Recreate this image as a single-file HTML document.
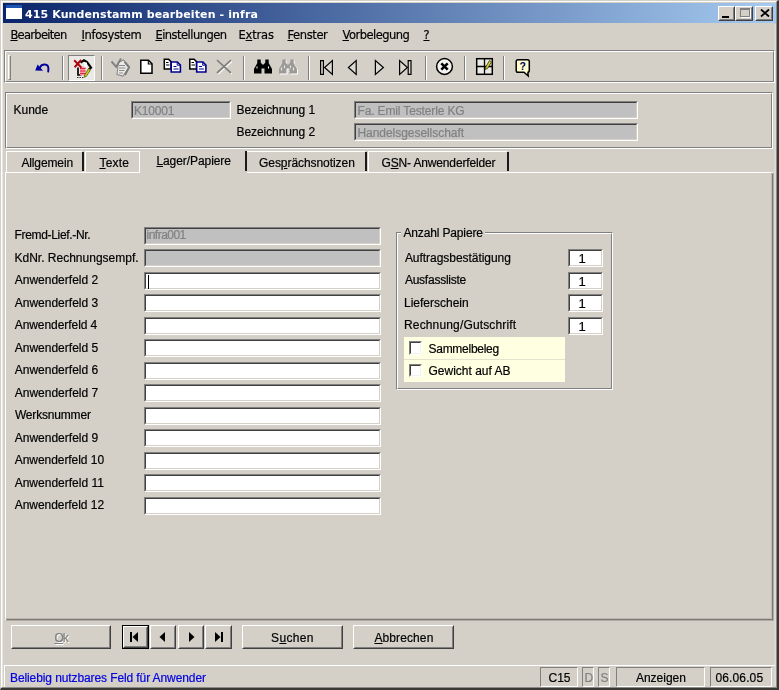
<!DOCTYPE html>
<html lang="de">
<head>
<meta charset="utf-8">
<title>415 Kundenstamm bearbeiten - infra</title>
<style>
html,body{margin:0;padding:0;}
body{width:779px;height:690px;overflow:hidden;background:#d4d0c8;position:relative;
 font-family:"Liberation Sans",sans-serif;font-size:12px;color:#000;}
.a{position:absolute;white-space:nowrap;box-sizing:border-box;}
.tx{line-height:14px;height:14px;}
u{text-decoration:underline;text-underline-offset:1px;}
#title{left:3px;top:3px;width:773px;height:20px;background:linear-gradient(90deg,#0a246a 0%,#a6caf0 100%);}
.etch{border:1px solid;border-color:#808080 #fff #fff #808080;}
.etch>i{position:absolute;left:0;top:0;right:0;bottom:0;border:1px solid;border-color:#fff #808080 #808080 #fff;}
.sunk{border:1px solid;border-color:#808080 #fff #fff #808080;}
.sunk>i{position:absolute;left:0;top:0;right:0;bottom:0;border:1px solid;border-color:#404040 #d4d0c8 #d4d0c8 #404040;}
.inp{background:#fff;}
.dis{background:#c0c0c0;}
.caret{position:absolute;left:3px;top:2px;width:1px;height:14px;background:#000;}
.btn{border:1px solid;border-color:#fff #404040 #404040 #fff;background:#d4d0c8;}
.btn>i{position:absolute;left:0;top:0;right:0;bottom:0;border:1px solid;border-color:#d4d0c8 #808080 #808080 #d4d0c8;}
.tb{border:1px solid;border-color:#fff #404040 #404040 #fff;background:#d4d0c8;}
.tb>i{position:absolute;left:0;top:0;right:0;bottom:0;border:1px solid;border-color:#d4d0c8 #808080 #808080 #d4d0c8;}
.sp{border:1px solid;border-color:#808080 #fff #fff #808080;}
.sep{width:2px;height:24px;top:56px;border-left:1px solid #808080;border-right:1px solid #fff;}
.ln{background:#fff;}
.dk{background:#404040;}
.gy{background:#808080;}
svg{position:absolute;overflow:visible;}
#txt{position:absolute;left:0;top:0;width:779px;height:690px;opacity:0.999;}
.bar{width:2px;background:#1c1a18;}
.tx{-webkit-text-stroke:0.2px currentColor;}
.chk>i{border-color:#404040 #f4f3ee #f4f3ee #404040;}
</style>
</head>
<body>
<!-- window frame -->
<div class="a" style="left:1px;top:1px;width:776px;height:687px;border:1px solid;border-color:#fff #8c8a86 #8c8a86 #fff"></div>
<div class="a" style="left:2px;top:2px;width:1px;height:685px;background:#e9e7e3"></div>
<div class="a" style="left:0;top:0;width:779px;height:690px;border:solid;border-width:1px 2px 2px 1px;border-color:#d4d0c8 #383835 #383835 #d4d0c8"></div>
<div class="a" style="left:774px;top:24px;width:2px;height:662px;background:#dddad5"></div>
<!-- title bar -->
<div id="title" class="a">
 <div class="a" style="left:3px;top:2px;width:16px;height:14px;background:#fff;border-top:3px solid #1d55b5"></div>
 <div class="a tb" style="left:715px;top:3px;width:17px;height:15px"><i></i><b class="a" style="left:3px;top:9px;width:7px;height:2px;background:#000"></b></div>
 <div class="a tb" style="left:732px;top:3px;width:18px;height:15px"><i></i><b class="a" style="left:4px;top:1px;width:10px;height:9px;border:1px solid #808080;border-top-width:2px;box-shadow:1px 1px 0 #fff"></b></div>
 <div class="a tb" style="left:752px;top:3px;width:18px;height:15px"><i></i>
  <svg width="10" height="8" style="left:4px;top:2px" viewBox="0 0 10 8"><path d="M1 0.5 L9 7.5 M9 0.5 L1 7.5" stroke="#000" stroke-width="1.8" fill="none"/></svg></div>
</div>
<!-- toolbar -->
<div class="a etch" style="left:4px;top:50px;width:771px;height:33px"><i></i></div>
<div class="a" style="left:8px;top:55px;width:3px;height:25px;border:1px solid;border-color:#fff #808080 #808080 #fff"></div>
<div class="a sep" style="left:62px"></div>
<div class="a" style="left:68px;top:55px;width:27px;height:26px;background:#ebe9e5;border:1px solid;border-color:#808080 #fff #fff #808080"></div>
<div class="a sep" style="left:101px"></div>
<div class="a sep" style="left:243px"></div>
<div class="a sep" style="left:308px"></div>
<div class="a sep" style="left:425px"></div>
<div class="a sep" style="left:464px"></div>
<div class="a sep" style="left:503px"></div>
<!--ICONS-START-->
<svg width="779" height="36" style="left:0;top:50px" viewBox="0 50 779 36">
<!-- undo -->
<path d="M40 67.2 C42 63.6 48.2 63.2 48.4 68.5 L48.2 71.6" fill="none" stroke="#0000a0" stroke-width="1.9" stroke-linecap="round"/>
<path d="M35.2 70.6 L37.6 64.6 L43 70.8 Z" fill="#0000a0"/>
<!-- pressed icon: delete doc -->
<path d="M80.5 62.6 L84 60.2 L87 62 L91 67.6 L88.5 70" fill="none" stroke="#000" stroke-width="2.200"/>
<path d="M78 67.5 V75 H81.5" fill="none" stroke="#000" stroke-width="1.7"/>
<rect x="80" y="66.5" width="5.5" height="9" fill="#ff9aa8"/>
<path d="M80 68.5h5.5M80 71h5.5M80 73.500h5.5" stroke="#e02040" stroke-width="1"/>
<path d="M88.6 68.4 L90.6 69.8 L86.2 76.6 L84.4 77.2 L84.6 75 Z" fill="#c8c820" stroke="#405000" stroke-width="0.7"/>
<path d="M84 62.5 h3 v4.500 h-3z" fill="#fff"/>
<path d="M74.2 60.2 L81.4 67.6 M81.2 60 L74.6 67.2" stroke="#b00010" stroke-width="2" fill="none"/>
<path d="M77 77.500h7" stroke="#303030" stroke-width="1" stroke-dasharray="1.500 1"/>
<!-- gray checklist (disabled) -->
<g>
<path d="M118.500 62.5 L123.500 60 L129.500 66.5 L123 76 L117 74.500 Z" fill="#ecebe8" stroke="#8a8a8a" stroke-width="1.1"/>
<path d="M119 65.500h6M119 68h6.500M119 70.500h5.500M119 73h4" stroke="#8a8a8a" stroke-width="1"/>
<path d="M124.500 62 L129 67.500 L125 75" fill="none" stroke="#7a7a7a" stroke-width="1.8"/>
<path d="M111.500 61.500 L116.200 66.800 L121 58.500" fill="none" stroke="#808080" stroke-width="1.9"/>
</g>
<!-- new doc -->
<path d="M140.800 60.200 H148.500 L152 63.800 V73.300 H140.800 Z" fill="#fff" stroke="#000" stroke-width="1.500"/>
<path d="M148.300 60.300 V64 H152" fill="none" stroke="#000" stroke-width="1.100"/>
<!-- copy 1 -->
<g>
<path d="M164.300 59.200 H168.600 L171 61.600 V69 H164.300 Z" fill="#fff" stroke="#000" stroke-width="1.500"/>
<path d="M166 62.500h2.500M166 65h3.500" stroke="#000" stroke-width="1"/>
<path d="M171.200 62 H177.400 L180.400 65 V72 H171.200 Z" fill="#fff" stroke="#00008c" stroke-width="1.600"/>
<path d="M173.500 66.500h3M173.500 69h5" stroke="#00008c" stroke-width="1"/>
<path d="M177.200 62.200 V65.200 H180.200" fill="none" stroke="#00008c" stroke-width="1"/>
</g>
<g transform="translate(25.500 0)">
<path d="M164.300 59.200 H168.600 L171 61.600 V69 H164.300 Z" fill="#fff" stroke="#000" stroke-width="1.500"/>
<path d="M166 62.500h2.500M166 65h3.500" stroke="#000" stroke-width="1"/>
<path d="M171.200 62 H177.400 L180.400 65 V72 H171.200 Z" fill="#fff" stroke="#00008c" stroke-width="1.600"/>
<path d="M173.500 66.500h3M173.500 69h5" stroke="#00008c" stroke-width="1"/>
<path d="M177.200 62.200 V65.200 H180.200" fill="none" stroke="#00008c" stroke-width="1"/>
</g>
<!-- gray X -->
<path d="M218 61.200 L232 74 M232 61.200 L218 74" stroke="#fff" stroke-width="1.500" fill="none"/>
<path d="M217 60.200 L231 73 M231 60.200 L217 73" stroke="#808080" stroke-width="1.700" fill="none"/>
<!-- binoculars -->
<g>
<path d="M257.300 59.500 h3.400 v3 l1.600 2 h1.400 l1.600 -2 v-3 h3.400 v3.500 l3.300 6 v4.500 h-7.500 v-5 h-3 v5 h-7.500 v-4.500 l3.300 -6 z" fill="#000"/>
<path d="M257 66.500v2M268.500 66.500v2" stroke="#fff" stroke-width="1"/>
</g>
<g transform="translate(26 1)"><path d="M257.300 59.500 h3.400 v3 l1.600 2 h1.400 l1.600 -2 v-3 h3.400 v3.500 l3.300 6 v4.500 h-7.500 v-5 h-3 v5 h-7.500 v-4.500 l3.300 -6 z" fill="#fff"/></g>
<g transform="translate(25 0)"><path d="M257.300 59.500 h3.400 v3 l1.600 2 h1.400 l1.600 -2 v-3 h3.400 v3.500 l3.300 6 v4.500 h-7.500 v-5 h-3 v5 h-7.500 v-4.500 l3.300 -6 z" fill="#9c9a96"/>
<path d="M256.500 67.500v3M259.500 65.500v2.500M265.500 65.500v2.500M268.500 67.500v3M262 71.500h2.500" stroke="#e8e6e2" stroke-width="1.200"/></g>
<!-- nav arrows -->
<g fill="#dcd9d2" stroke="#000" stroke-width="1.200">
<path d="M320.600 60.600 h2.800 v13.800 h-2.800 z"/>
<path d="M332.400 60.600 V74.400 L324.600 67.500 Z"/>
<path d="M356.200 60.600 V74.400 L348.400 67.500 Z"/>
<path d="M375.400 60.600 V74.400 L383.400 67.500 Z"/>
<path d="M399.600 60.600 V74.400 L407.400 67.500 Z"/>
<path d="M408.200 60.600 h2.800 v13.800 h-2.800 z"/>
</g>
<!-- circle X -->
<circle cx="444.500" cy="66.500" r="7.900" fill="#f4f3f0" stroke="#000" stroke-width="1.500"/>
<path d="M441.300 63.300 L447.700 69.700 M447.700 63.300 L441.300 69.700" stroke="#000" stroke-width="2.500"/>
<!-- grid + pencil -->
<rect x="476.700" y="58.700" width="15.600" height="15.600" fill="#eceae5" stroke="#000" stroke-width="1.500"/>
<path d="M484.500 59 V74 M477 66.500 H492" stroke="#000" stroke-width="1.300"/>
<path d="M489.500 60.500 L491.500 62 L487.500 68.500 L485.500 69.500 L485.800 67 Z" fill="#d8d040" stroke="#303000" stroke-width="0.800"/>
<!-- help balloon -->
<path d="M518 59.800 H527.500 Q529.300 59.800 529.300 61.600 V70.500 Q529.300 72.300 527.500 72.300 H527.800 L528.200 76 L524 72.300 H518 Q516.200 72.300 516.200 70.500 V61.600 Q516.200 59.800 518 59.800 Z" fill="#ffffd0" stroke="#000" stroke-width="1.500"/>
<text x="522.800" y="70.300" text-anchor="middle" font-family="Liberation Sans, sans-serif" font-weight="bold" font-size="10.500" fill="#000060">?</text>
</svg>
<!--ICONS-END-->
<!-- kunde panel -->
<div class="a etch" style="left:5px;top:92px;width:768px;height:57px"><i></i></div>
<!-- tabs -->
<div class="a" style="left:6px;top:151px;width:76px;height:21px;border-left:1px solid #fff;border-top:1px solid #fff"></div>
<div class="a" style="left:85px;top:151px;width:55px;height:21px;border:1px solid #fff;border-bottom:0"></div>
<div class="a" style="left:247px;top:151px;width:118px;height:21px;border-top:1px solid #fff"></div>
<div class="a" style="left:368px;top:151px;width:139px;height:21px;border-left:1px solid #fff;border-top:1px solid #fff"></div>
<div class="a bar" style="left:82px;top:152px;height:19px"></div>
<div class="a bar" style="left:245px;top:151px;height:20px"></div>
<div class="a bar" style="left:365px;top:152px;height:19px"></div>
<div class="a bar" style="left:507px;top:152px;height:19px"></div>
<!-- tab page -->
<div class="a" style="left:5px;top:172px;width:769px;height:449px;border:1px solid;border-color:#fff #aeaba5 #aeaba5 #fff"><b class="a" style="left:0;top:0;right:0;bottom:0;border:1px solid;border-color:transparent #7c7975 #7c7975 transparent"></b><b class="a" style="left:-1px;top:-1px;right:1px;bottom:1px;border:1px solid;border-color:transparent #bcb9b3 #bcb9b3 transparent"></b></div>
<div class="a" style="left:140px;top:172px;width:107px;height:1px;background:#d4d0c8"></div>
<!-- bottom buttons -->
<div class="a btn" style="left:11px;top:625px;width:100px;height:24px"><i></i></div>
<div class="a" style="left:122px;top:625px;width:27px;height:24px;background:#000"></div>
<div class="a btn" style="left:123px;top:626px;width:25px;height:22px"><i></i></div>
<div class="a btn" style="left:150px;top:625px;width:26px;height:24px"><i></i></div>
<div class="a btn" style="left:178px;top:625px;width:26px;height:24px"><i></i></div>
<div class="a btn" style="left:205px;top:625px;width:27px;height:24px"><i></i></div>
<div class="a btn" style="left:242px;top:625px;width:101px;height:24px"><i></i></div>
<div class="a btn" style="left:353px;top:625px;width:101px;height:24px"><i></i></div>
<svg width="12" height="10" style="left:129px;top:632px" viewBox="0 0 12 10"><path d="M1 0h2v10h-2z M9 0 L9 10 L3.5 5z" fill="#000"/></svg>
<svg width="12" height="10" style="left:157px;top:632px" viewBox="0 0 12 10"><path d="M8 0 L8 10 L2.5 5z" fill="#000"/></svg>
<svg width="12" height="10" style="left:185px;top:632px" viewBox="0 0 12 10"><path d="M4 0 L4 10 L9.5 5z" fill="#000"/></svg>
<svg width="12" height="10" style="left:211.500px;top:632px" viewBox="0 0 12 10"><path d="M9 0h2v10h-2z M3 0 L3 10 L8.5 5z" fill="#000"/></svg>
<!-- status bar -->
<div class="a ln" style="left:4px;top:665px;width:771px;height:1px"></div>
<div class="a ln" style="left:4px;top:665px;width:1px;height:22px"></div>
<div class="a sp" style="left:540px;top:667px;width:38px;height:20px"></div>
<div class="a sp" style="left:582px;top:667px;width:12px;height:20px"></div>
<div class="a sp" style="left:598px;top:667px;width:12px;height:20px"></div>
<div class="a sp" style="left:616px;top:667px;width:89px;height:20px"></div>
<div class="a sp" style="left:710px;top:667px;width:62px;height:20px"></div>

<div class="a sunk dis" style="left:131px;top:101px;width:100px;height:18px"><i></i></div>
<div class="a sunk dis" style="left:354px;top:101px;width:284px;height:18px"><i></i></div>
<div class="a sunk dis" style="left:354px;top:123px;width:284px;height:18px"><i></i></div>
<div class="a sunk dis" style="left:144px;top:227px;width:237px;height:18px"><i></i></div>
<div class="a sunk dis" style="left:144px;top:249px;width:237px;height:18px"><i></i></div>
<div class="a sunk inp" style="left:144px;top:272px;width:237px;height:18px"><i></i><b class="caret"></b></div>
<div class="a sunk inp" style="left:144px;top:294px;width:237px;height:18px"><i></i></div>
<div class="a sunk inp" style="left:144px;top:317px;width:237px;height:18px"><i></i></div>
<div class="a sunk inp" style="left:144px;top:339px;width:237px;height:18px"><i></i></div>
<div class="a sunk inp" style="left:144px;top:362px;width:237px;height:18px"><i></i></div>
<div class="a sunk inp" style="left:144px;top:384px;width:237px;height:18px"><i></i></div>
<div class="a sunk inp" style="left:144px;top:407px;width:237px;height:18px"><i></i></div>
<div class="a sunk inp" style="left:144px;top:429px;width:237px;height:18px"><i></i></div>
<div class="a sunk inp" style="left:144px;top:452px;width:237px;height:18px"><i></i></div>
<div class="a sunk inp" style="left:144px;top:474px;width:237px;height:18px"><i></i></div>
<div class="a sunk inp" style="left:144px;top:497px;width:237px;height:18px"><i></i></div>
<div class="a sunk inp" style="left:568px;top:249px;width:35px;height:18px"><i></i></div>
<div class="a sunk inp" style="left:568px;top:272px;width:35px;height:18px"><i></i></div>
<div class="a sunk inp" style="left:568px;top:294px;width:35px;height:18px"><i></i></div>
<div class="a sunk inp" style="left:568px;top:317px;width:35px;height:18px"><i></i></div>
<!-- group box -->
<div class="a etch" style="left:396px;top:232px;width:217px;height:158px"><i></i></div>
<div class="a" style="left:401px;top:232px;width:84px;height:2px;background:#d4d0c8"></div>
<div class="a" style="left:404px;top:337px;width:161px;height:45px;background:#e4e2cc"></div>
<div class="a" style="left:404px;top:337px;width:161px;height:22px;background:#ffffe1"></div>
<div class="a" style="left:404px;top:360px;width:161px;height:22px;background:#ffffe1"></div>
<div class="a sunk inp chk" style="left:409px;top:341px;width:13px;height:14px"><i></i></div>
<div class="a sunk inp chk" style="left:409px;top:364px;width:13px;height:13px"><i></i></div>

<div id="txt"><span class="a tx" id="ttl" style="left:25px;top:8px;font-size:11px;letter-spacing:0.11px;-webkit-text-stroke:0;color:#fff;font-weight:bold;font-family:DejaVu Sans,Liberation Sans,sans-serif;">415 Kundenstamm bearbeiten - infra</span>
<span class="a tx" id="m1" style="left:10.4px;top:28px;font-size:11.5px;letter-spacing:-0.7px;font-family:DejaVu Sans,Liberation Sans,sans-serif;"><u>B</u>earbeiten</span>
<span class="a tx" id="m2" style="left:81.5px;top:28px;font-size:11.5px;letter-spacing:-0.35px;font-family:DejaVu Sans,Liberation Sans,sans-serif;"><u>I</u>nfosystem</span>
<span class="a tx" id="m3" style="left:155.4px;top:28px;font-size:11.5px;letter-spacing:-0.53px;font-family:DejaVu Sans,Liberation Sans,sans-serif;"><u>E</u>instellungen</span>
<span class="a tx" id="m4" style="left:238.5px;top:28px;font-size:11.5px;letter-spacing:-0.18px;font-family:DejaVu Sans,Liberation Sans,sans-serif;">E<u>x</u>tras</span>
<span class="a tx" id="m5" style="left:287.5px;top:28px;font-size:11.5px;letter-spacing:-0.39px;font-family:DejaVu Sans,Liberation Sans,sans-serif;"><u>F</u>enster</span>
<span class="a tx" id="m6" style="left:342.5px;top:28px;font-size:11.5px;letter-spacing:-0.52px;font-family:DejaVu Sans,Liberation Sans,sans-serif;"><u>V</u>orbelegung</span>
<span class="a tx" id="m7" style="left:423.4px;top:28px;font-size:11.5px;font-family:DejaVu Sans,Liberation Sans,sans-serif;"><u>?</u></span>
<span class="a tx" id="k1" style="left:13.5px;top:103px;font-size:12px;">Kunde</span>
<span class="a tx" id="k2" style="left:236.5px;top:103px;font-size:12px;letter-spacing:-0.07px;">Bezeichnung 1</span>
<span class="a tx" id="k3" style="left:236.5px;top:125px;font-size:12px;letter-spacing:-0.07px;">Bezeichnung 2</span>
<span class="a tx" id="k4" style="left:134px;top:104px;font-size:12px;letter-spacing:-0.18px;color:#808080;">K10001</span>
<span class="a tx" id="k5" style="left:357.5px;top:104px;font-size:12px;letter-spacing:-0.14px;color:#808080;">Fa. Emil Testerle KG</span>
<span class="a tx" id="k6" style="left:357.5px;top:126px;font-size:12px;letter-spacing:-0.05px;color:#808080;">Handelsgesellschaft</span>
<span class="a tx" id="t1" style="left:21.4px;top:156px;font-size:12px;letter-spacing:-0.12px;">Allgemein</span>
<span class="a tx" id="t2" style="left:99.4px;top:156px;font-size:12px;letter-spacing:0.23px;"><u>T</u>exte</span>
<span class="a tx" id="t3" style="left:156.4px;top:154px;font-size:12px;letter-spacing:-0.07px;"><u>L</u>ager/Papiere</span>
<span class="a tx" id="t4" style="left:259px;top:156px;font-size:12px;letter-spacing:-0.06px;">Ges<u>p</u>rächsnotizen</span>
<span class="a tx" id="t5" style="left:381.5px;top:156px;font-size:12px;letter-spacing:-0.15px;">G<u>S</u>N- Anwenderfelder</span>
<span class="a tx" id="l0" style="left:14.5px;top:228px;font-size:12px;letter-spacing:-0.32px;">Fremd-Lief.-Nr.</span>
<span class="a tx" id="l1" style="left:14.5px;top:251px;font-size:12px;">KdNr. Rechnungsempf.</span>
<span class="a tx" id="l2" style="left:14.7px;top:273px;font-size:12px;letter-spacing:0.01px;">Anwenderfeld 2</span>
<span class="a tx" id="l3" style="left:14.7px;top:296px;font-size:12px;letter-spacing:0.01px;">Anwenderfeld 3</span>
<span class="a tx" id="l4" style="left:14.7px;top:318px;font-size:12px;letter-spacing:-0.06px;">Anwenderfeld 4</span>
<span class="a tx" id="l5" style="left:14.7px;top:341px;font-size:12px;letter-spacing:0.01px;">Anwenderfeld 5</span>
<span class="a tx" id="l6" style="left:14.7px;top:363px;font-size:12px;letter-spacing:0.01px;">Anwenderfeld 6</span>
<span class="a tx" id="l7" style="left:14.7px;top:386px;font-size:12px;letter-spacing:0.01px;">Anwenderfeld 7</span>
<span class="a tx" id="l8" style="left:14.9px;top:408px;font-size:12px;letter-spacing:-0.18px;">Werksnummer</span>
<span class="a tx" id="l9" style="left:14.7px;top:431px;font-size:12px;letter-spacing:0.01px;">Anwenderfeld 9</span>
<span class="a tx" id="l10" style="left:14.7px;top:453px;font-size:12px;letter-spacing:-0.05px;">Anwenderfeld 10</span>
<span class="a tx" id="l11" style="left:14.7px;top:476px;font-size:12px;">Anwenderfeld 11</span>
<span class="a tx" id="l12" style="left:14.7px;top:498px;font-size:12px;letter-spacing:-0.05px;">Anwenderfeld 12</span>
<span class="a tx" id="f0" style="left:146.5px;top:228px;font-size:12px;letter-spacing:-0.51px;color:#808080;">infra001</span>
<span class="a tx" id="g0" style="left:403.4px;top:226px;font-size:12px;letter-spacing:-0.14px;">Anzahl Papiere</span>
<span class="a tx" id="g1" style="left:404.9px;top:251px;font-size:12px;letter-spacing:-0.04px;">Auftragsbestätigung</span>
<span class="a tx" id="g2" style="left:404.9px;top:273px;font-size:12px;letter-spacing:-0.24px;">Ausfassliste</span>
<span class="a tx" id="g3" style="left:404px;top:296px;font-size:12px;">Lieferschein</span>
<span class="a tx" id="g4" style="left:404px;top:318px;font-size:12px;letter-spacing:0.15px;">Rechnung/Gutschrift</span>
<span class="a tx" id="g5" style="left:428.5px;top:342px;font-size:12px;letter-spacing:-0.27px;">Sammelbeleg</span>
<span class="a tx" id="g6" style="left:428.5px;top:364px;font-size:12px;">Gewicht auf AB</span>
<span class="a tx" id="n0" style="left:578.5px;top:252px;font-size:13px;">1</span>
<span class="a tx" id="n1" style="left:578.5px;top:275px;font-size:13px;">1</span>
<span class="a tx" id="n2" style="left:578.5px;top:297px;font-size:13px;">1</span>
<span class="a tx" id="n3" style="left:578.5px;top:320px;font-size:13px;">1</span>
<span class="a tx" id="b1" style="left:54.4px;top:631px;font-size:12px;letter-spacing:-0.9px;color:#808080;text-shadow:1px 1px 0 #fff;"><u>O</u>k</span>
<span class="a tx" id="b2" style="left:271px;top:631px;font-size:12px;letter-spacing:0.36px;">S<u>u</u>chen</span>
<span class="a tx" id="b3" style="left:374.4px;top:631px;font-size:12px;letter-spacing:0.11px;"><u>A</u>bbrechen</span>
<span class="a tx" id="s1" style="left:10px;top:671px;font-size:12px;letter-spacing:-0.1px;color:#0000e0;">Beliebig nutzbares Feld für Anwender</span>
<span class="a tx" id="s2" style="left:548.5px;top:671px;font-size:12px;">C15</span>
<span class="a tx" id="s3" style="left:584.5px;top:671px;font-size:12px;color:#808080;">D</span>
<span class="a tx" id="s4" style="left:600.5px;top:671px;font-size:12px;color:#808080;">S</span>
<span class="a tx" id="s5" style="left:635.9px;top:671px;font-size:12px;">Anzeigen</span>
<span class="a tx" id="s6" style="left:715.5px;top:671px;font-size:12px;letter-spacing:0.12px;">06.06.05</span></div>
</body>
</html>
